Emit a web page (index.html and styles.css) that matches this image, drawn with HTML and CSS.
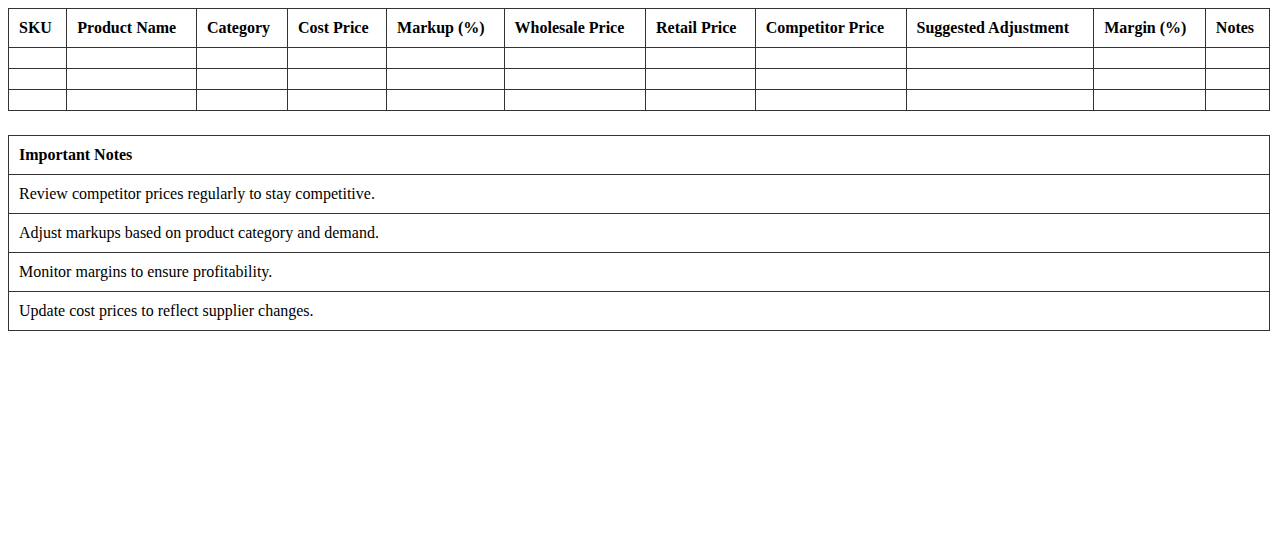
FILE: index.html
```html
<!DOCTYPE html>
<html>
<head>
<meta charset="utf-8">
<link rel="stylesheet" href="styles.css">
</head>
<body>
<table class="grid">
  <thead>
    <tr>
      <th>SKU</th><th>Product Name</th><th>Category</th><th>Cost Price</th><th>Markup (%)</th><th>Wholesale Price</th><th>Retail Price</th><th>Competitor Price</th><th>Suggested Adjustment</th><th>Margin (%)</th><th>Notes</th>
    </tr>
  </thead>
  <tbody>
    <tr><td></td><td></td><td></td><td></td><td></td><td></td><td></td><td></td><td></td><td></td><td></td></tr>
    <tr><td></td><td></td><td></td><td></td><td></td><td></td><td></td><td></td><td></td><td></td><td></td></tr>
    <tr><td></td><td></td><td></td><td></td><td></td><td></td><td></td><td></td><td></td><td></td><td></td></tr>
  </tbody>
</table>
<table class="grid notes">
  <thead><tr><th>Important Notes</th></tr></thead>
  <tbody>
    <tr><td>Review competitor prices regularly to stay competitive.</td></tr>
    <tr><td>Adjust markups based on product category and demand.</td></tr>
    <tr><td>Monitor margins to ensure profitability.</td></tr>
    <tr><td>Update cost prices to reflect supplier changes.</td></tr>
  </tbody>
</table>
</body>
</html>
```
FILE: styles.css
```css
body {
  margin: 8px;
  font-family: "Liberation Serif", "Times New Roman", serif;
  font-size: 16px;
  color: #000;
  background: #fff;
}
.grid {
  width: 100%;
  border-collapse: collapse;
}
.grid th,
.grid td {
  border: 1px solid #333;
  padding: 10px;
  text-align: left;
}
.grid th {
  font-weight: bold;
}
.notes {
  margin-top: 24px;
}
```
